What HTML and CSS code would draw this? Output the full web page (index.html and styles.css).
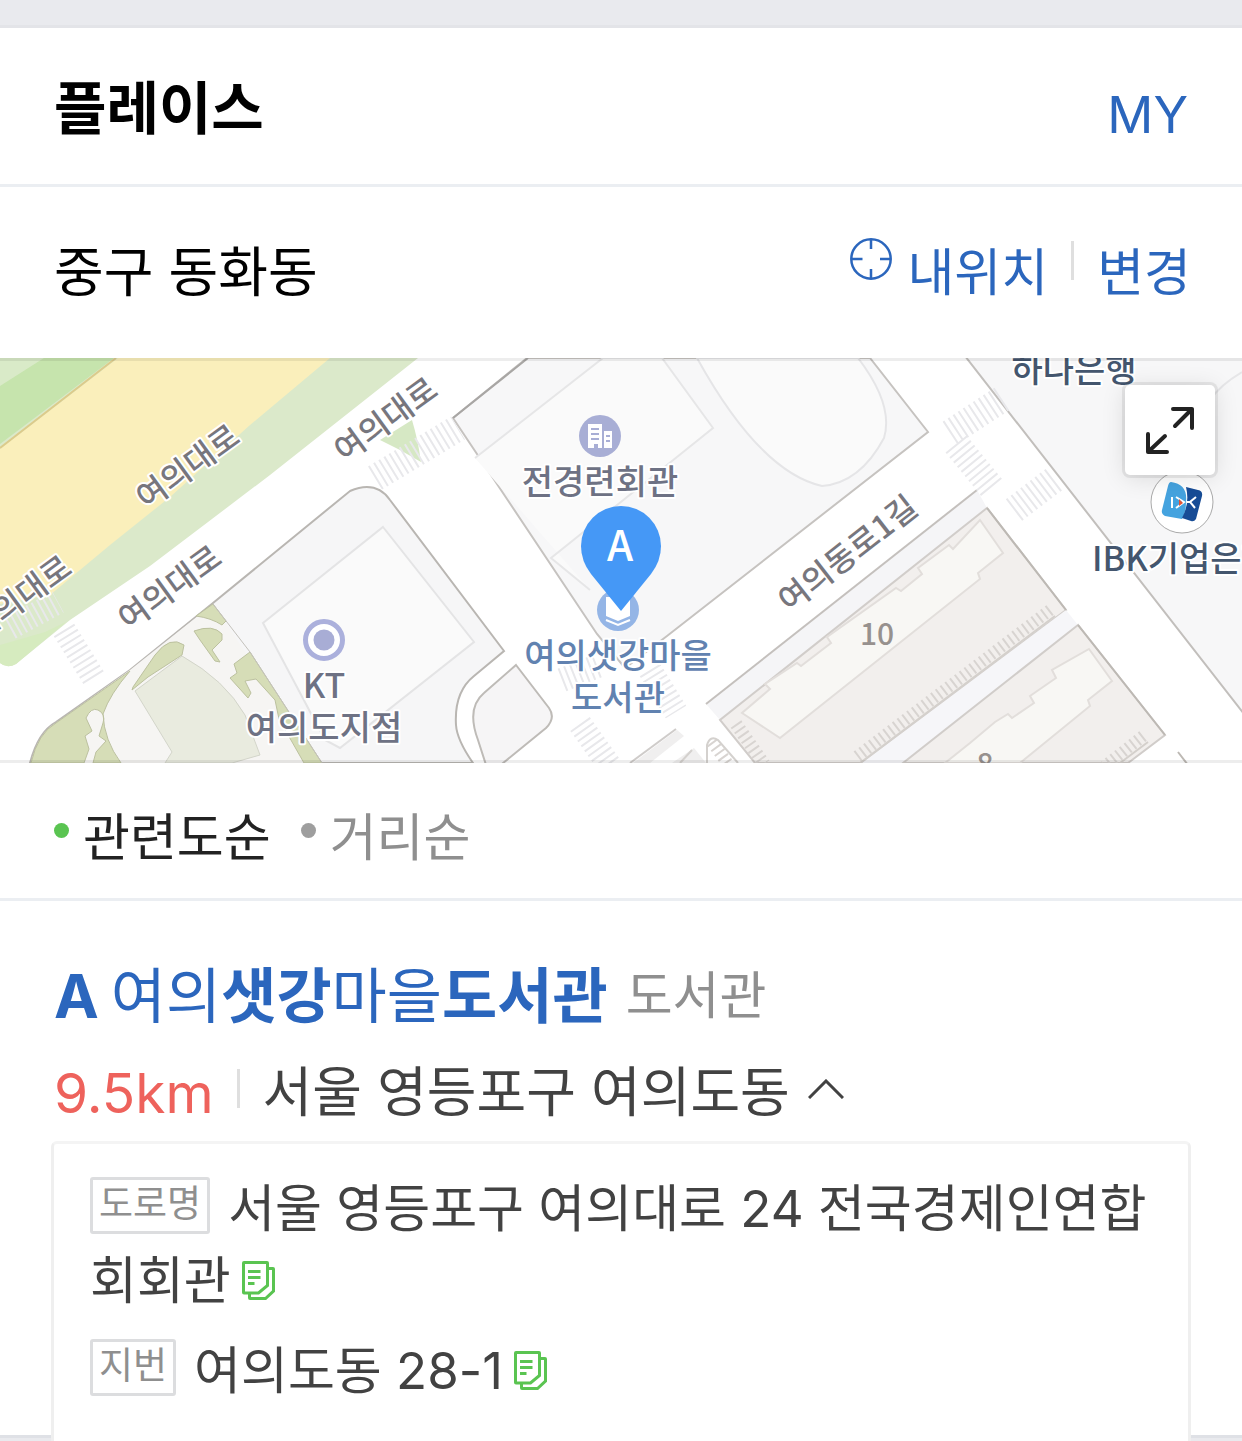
FILE: index.html
```html
<!DOCTYPE html>
<html lang="ko">
<head>
<meta charset="utf-8">
<meta name="viewport" content="width=device-width, initial-scale=1">
<title>플레이스</title>
<link rel="stylesheet" href="styles.css">
</head>
<body>
<svg width="0" height="0" class="symbols" aria-hidden="true">
  <symbol id="copy" viewBox="0 0 33 39">
    <path d="M3 1.5h22q.5 0 .5.5v22.500l-9 7.500H2q-.5 0-.5-.5V2q0-.5.5-.5z"/>
    <path d="M26 7.500h5q.5 0 .5.5v22l-8 7.500H8q-.5 0-.5-.5v-5"/>
    <path d="M6 10.500h12.500M6 16.500h12.500M6 22.500h6.500"/>
  </symbol>
</svg>
<div class="page">
  <div class="band"></div>
  <header class="header">
    <h1 class="title">플레이스</h1>
    <a class="my" href="#">MY</a>
  </header>

  <section class="location">
    <p class="area">중구 동화동</p>
    <div class="location-links">
      <a class="link locate" href="#">
        <svg class="target" viewBox="0 0 42 42" stroke-width="2.5" aria-hidden="true"><circle cx="21" cy="21" r="19.700"/><path d="M21 2v9M21 40v-9M2 21h10.500M40 21H30"/></svg>
        <span>내위치</span>
      </a>
      <span class="divider"></span>
      <a class="link" href="#">변경</a>
    </div>
  </section>

  <section class="map" aria-label="지도">
    <svg class="map-canvas" viewBox="0 358 1242 405" preserveAspectRatio="xMidYMid slice">
      <rect y="358" width="1242" height="405" fill="#fff"/>
      <!-- park strip along the avenue -->
      <path d="M0 358H418L270 475 150 566 70 620 16 664Q7 669 0 663z" fill="#dbe9ca"/>
      <path d="M0 645L45 632 66 622 16 664Q7 669 0 663z" fill="#d6ebbf"/>
      <path d="M118 358H330L250 425 170 497 110 545 50 595 0 604V449z" fill="#faefbb"/>
      <path d="M0 358H114L0 444z" fill="#c6e4ad"/>
      <path d="M0 358H44L0 386z" fill="#d9eac8"/>
      <path d="M116 358L0 448" stroke="#dccb8b" stroke-width="2"/>
      <path d="M380 440L412 420Q418 440 421 462L400 450z" fill="#d6e8c4"/>

      <!-- KT block and garden -->
      <path d="M30 763Q38 732 56 722L130 670 213 603 350 491Q376 480 390 500L504 651 474 676Q454 692 456 725 457 740 473 763z" fill="#f6f6f7" stroke="#b9b6b2" stroke-width="2"/>
      <path d="M213 604L130 670 56 723Q38 733 31 763H320z" fill="#f6f5f3"/>
      <path d="M383 527L474 642 340 748 325 740 263 623z" fill="#fafafa" stroke="#e4e4e5" stroke-width="2"/>
      <g fill="#d6ddb7" stroke="#bcc19f">
        <path d="M130 671L56 723Q38 733 31 763H84L89 749 85 736 92 731 86 718Q91 707 98 710 106 714 103 723L99 736 106 741 96 752 93 763H121Q104 740 103 714 110 694 130 671z"/>
        <path d="M133 687L155 655Q170 635 184 645L182 655 148 677 132 690z"/>
        <path d="M213 604L226 621 222 625Q211 618 196 616z"/>
        <path d="M194 631Q213 624 222 634L222 640 212 650 220 662 215 661 200 640z"/>
        <path d="M250 652L234 664 237 673 230 678 248 698 251 693 245 681 256 679 275 700 279 719 304 763H322z"/>
      </g>
      <path d="M182 656L135 691 172 752 165 763H232L260 755 245 715Q225 680 182 656z" fill="#e9ebdf" stroke="#d3d5ca"/>
      <path d="M213 604L250 652 322 763" fill="none" stroke="#c4c2bc"/>
      <path d="M516 665L549 708Q556 718 546 728L497 768H487L478 740Q466 708 484 693z" fill="#f6f5f6" stroke="#bebbb7" stroke-width="2"/>

      <!-- library block -->
      <path d="M527 358L453 418 597 634 625 668 667 636 928 432 870 358z" fill="#f7f7f8" stroke="#c6c3c0" stroke-width="2"/>
      <path d="M475 458L603 358H662L713 428 672 461 551 558 590 590" fill="#fafafa" stroke="#e6e6e7" stroke-width="2"/>
      <path d="M697 358Q760 472 822 486 860 483 884 438 894 405 858 358z" fill="#fafafa" stroke="#e5e5e7" stroke-width="2"/>
      <path d="M528 358L453 418" stroke="#a8a6a4" stroke-width="2"/>

      <!-- bank block -->
      <path d="M965 356L1244 714V356z" fill="#f7f7f8" stroke="#c2bfbc" stroke-width="2"/>
      <path d="M1242 372Q1220 385 1210 400" fill="none" stroke="#e6e6e8" stroke-width="2"/>

      <!-- apartment blocks -->
      <path d="M977 490L706 704 720 720 987 508z" fill="#f5f5f7"/>
      <path d="M977 490L706 704" stroke="#c4c0bd" stroke-width="2"/>
      <path d="M987 508L720 720 755 763H862L1066 610z" fill="#f2efed" stroke="#d1cdca" stroke-width="2"/>
      <path d="M980 520L1003 553 978 573 980 579 780 738 742 713 770 689 765 684 797 663 801 666 831 643 827 637 896 588 901 591 922 574 918 568 949 545 953 549z" fill="#f8f7f4" stroke="#e2dedb" stroke-width="2"/>
      <path d="M1066 610L862 763H905L1078 625z" fill="#f6f6f9"/>
      <path d="M1078 625L903 763H1128L1165 735z" fill="#f2efed" stroke="#d1cdca" stroke-width="2"/>
      <path d="M1089 649L1112 681 1088 700 1090 706 1020 763H945L970 743 995 722 1008 714 1012 718 1034 703 1030 696 1056 678 1052 670z" fill="#f8f7f4" stroke="#e2dedb" stroke-width="2"/>
      <path d="M987 508L1066 610M1078 625L1165 735M1178 752L1188 765" stroke="#bdb9b4" stroke-width="2"/>
      <path d="M633 763L677 730 684 736 650 763zM672 763L694 748 706 763z" fill="#f0efef"/>
      <path d="M630 763L676 729" fill="none" stroke="#cfccca" stroke-width="2"/>
      <g fill="none" stroke="#d8d4d1">
        <path d="M1050 610L855 758" stroke-width="12" stroke-dasharray="2 4"/>
        <path d="M1143 736L1105 766" stroke-width="12" stroke-dasharray="2 4"/>
        <path d="M736 724L764 764" stroke-width="13" stroke-dasharray="2 4"/>
        <path d="M712 742L728 764" stroke-width="12" stroke-dasharray="2 4"/>
      </g>
      <path d="M1055 616L860 763M1148 742L1120 763" stroke="#d4d0cc" stroke-width="2"/>
      <path d="M707 763V745Q710 735 718 740L738 763M680 763L692 750" fill="none" stroke="#d4d1ce" stroke-width="2"/>
      <!-- crosswalks -->
      <g fill="none" stroke="#e8e8eb">
        <path d="M950 433L1002 399M956 444L992 488M1014 510L1056 478M375 478L458 428" stroke-width="27" stroke-dasharray="2 4"/>
        <path d="M64 630L95 680M10 628L58 602M580 724L610 766M562 680L600 665M650 670L676 712" stroke-width="24" stroke-dasharray="2 4"/>
      </g>

      <g class="road">
        <text transform="translate(188 467) rotate(-36)" y="11">여의대로</text>
        <text transform="translate(170 588) rotate(-36)" y="11">여의대로</text>
        <text transform="translate(386 420) rotate(-36)" y="11">여의대로</text>
        <text transform="translate(20 598) rotate(-36)" y="11">여의대로</text>
        <text transform="translate(848 554) rotate(-38)" y="11">여의동로1길</text>
      </g>
      <g class="block-number"><text x="877" y="645">10</text><text x="985" y="775">8</text></g>

      <circle cx="600" cy="436" r="21" fill="#a8aed5"/>
      <path d="M588 424H602V448H598V444H594V448H588zM604 431H612V448H604z" fill="#fff"/>
      <path d="M591 429h8M591 434h8M591 439h8M606 436h4M606 441h4" stroke="#a8aed5" stroke-width="2"/>
      <circle cx="324" cy="640" r="18.500" fill="#fff" stroke="#abb0dc" stroke-width="5"/>
      <circle cx="324" cy="640" r="10.500" fill="#a8add5"/>
      <circle cx="618" cy="610" r="21" fill="#94b5e6"/>
      <path d="M606 597H630V616L618 621 606 616z" fill="#fff"/>
      <path d="M606 620L618 625 630 620" fill="none" stroke="#fff" stroke-width="2"/>
      <circle cx="1182" cy="502" r="31" fill="#fff" stroke="#aaa"/>
      <path d="M1171 482Q1188 484 1186 502 1186 513 1182 519L1165 516Q1161 514 1162 510L1168 486Q1169 482 1171 482z" fill="#45a3df"/>
      <path d="M1186 487L1198 490Q1203 491 1202 496L1196 519Q1194 522 1191 521L1182 518Q1190 503 1186 487z" fill="#174c96"/>
      <path d="M1172 497v11M1176 497l8 5-8 6M1187 502h3M1196 497l-6 5 5 6" fill="none" stroke="#fff" stroke-width="2"/>
      <path d="M1179 499l4 4-4 3z" fill="#e35435"/>

      <g class="place"><text x="600" y="494">전경련회관</text><text x="324" y="698">KT</text><text x="324" y="740">여의도지점</text></g>
      <g class="place library"><text x="618" y="668">여의샛강마을</text><text x="618" y="710">도서관</text></g>
      <g class="place bank"><text x="1074" y="382">하나은행</text><text class="from-start" x="1092" y="571">IBK기업은행</text></g>

      <path d="M621 611L591 574Q581 561 581 546A40 40 0 0 1 661 546Q661 561 651 574z" fill="#4598f6"/>
      <text class="pin-letter" x="620" y="561">A</text>
    </svg>
    <button class="expand" type="button" aria-label="지도 확대">
      <svg viewBox="0 0 48 48" aria-hidden="true"><path d="M27 3H46V22M46 3L29 20M2 28V46H21M2 46L19 30"/></svg>
    </button>
  </section>

  <nav class="sort" aria-label="정렬">
    <a class="sort-item is-active" href="#">관련도순</a>
    <a class="sort-item" href="#">거리순</a>
  </nav>

  <main class="result">
    <div class="heading">
      <h2 class="name"><a href="#"><b class="rank">A</b>여의<b>샛강</b>마을<b>도서관</b></a></h2>
      <span class="category">도서관</span>
    </div>
    <div class="summary">
      <span class="distance">9.5km</span>
      <span class="divider"></span>
      <button class="address-toggle" type="button" aria-expanded="true">
        <span>서울 영등포구 여의도동</span>
        <svg class="chevron" viewBox="0 0 36 20" aria-hidden="true"><path d="M1 19L18 2 35 19"/></svg>
      </button>
    </div>
    <div class="panel-anchor">
      <div class="panel">
        <p class="address"><span class="badge">도로명</span>서울 영등포구 여의대로 24 전국경제인연합회회관<button class="copy" type="button" aria-label="도로명 주소 복사"><svg aria-hidden="true"><use href="#copy"/></svg></button></p>
        <p class="address"><span class="badge">지번</span>여의도동 28-1<button class="copy" type="button" aria-label="지번 주소 복사"><svg aria-hidden="true"><use href="#copy"/></svg></button></p>
      </div>
    </div>
  </main>
  <div class="band band-bottom"></div>
</div>
</body>
</html>
```
FILE: styles.css
```css
* {
  box-sizing: border-box;
}

body,
h1,
h2,
p {
  margin: 0;
}

body {
  background: #fff;
  color: #424242;
  font-family: Inter, "Noto Sans CJK KR", sans-serif;
  font-size: 51px;
  line-height: 72px;
}

a {
  color: inherit;
  text-decoration: none;
}

button {
  padding: 0;
  border: 0;
  background: none;
  color: inherit;
  font: inherit;
  cursor: pointer;
}

.symbols {
  position: absolute;
}

.page {
  display: flex;
  flex-direction: column;
  min-height: 100vh;
  overflow: hidden;
}

.band {
  height: 28px;
  background: #e9eaee;
  border-bottom: 3px solid #e3e4e8;
}

.band-bottom {
  height: 6px;
  border-top: 3px solid #dfe1e6;
  border-bottom: 0;
}

.header {
  display: flex;
  justify-content: space-between;
  align-items: flex-start;
  padding: 45px 54px 33px;
  border-bottom: 3px solid #ebeef2;
}

.title {
  color: #000;
  font-size: 57px;
  font-weight: 700;
}

.my {
  margin-top: 6px;
  color: #2b66bd;
}

.location {
  display: flex;
  justify-content: space-between;
  padding: 50px 51px 49px 54px;
}

.area {
  color: #000;
  font-size: 54px;
}

.location-links,
.locate,
.summary,
.heading,
.address-toggle {
  display: flex;
  align-items: flex-start;
}

.link {
  color: #2b66bd;
}

.locate {
  gap: 15px;
}

.target {
  width: 42px;
  height: 42px;
  margin-top: 1px;
  fill: none;
  stroke: #2b66bd;
}

.divider {
  width: 3px;
  height: 39px;
  margin: 4px 23px 0;
  background: #dfdfdf;
}

.map {
  position: relative;
  height: 405px;
  overflow: hidden;
}

.map::after {
  content: "";
  position: absolute;
  inset: 0;
  border: solid rgba(0, 0, 0, 0.07);
  border-width: 3px 0;
  pointer-events: none;
}

.map-canvas {
  display: block;
  width: 100%;
  height: 100%;
}

.map-canvas text {
  font-family: "Noto Sans CJK KR", sans-serif;
  font-size: 34px;
  font-weight: 500;
  text-anchor: middle;
  stroke: #fff;
  stroke-width: 4px;
  stroke-linejoin: round;
  paint-order: stroke;
}

.map-canvas .road text {
  fill: #77767d;
  font-size: 32px;
}

.map-canvas .block-number text {
  fill: #97918e;
  font-size: 30px;
  stroke: none;
}

.map-canvas .place text {
  fill: #6e7284;
}

.map-canvas .library text {
  fill: #6182b0;
}

.map-canvas .bank text {
  fill: #44566e;
}

.map-canvas .bank .from-start {
  text-anchor: start;
}

.map-canvas .pin-letter {
  fill: #fff;
  stroke: none;
  font-size: 42px;
}

.expand {
  position: absolute;
  top: 27px;
  right: 27px;
  display: grid;
  place-items: center;
  width: 90px;
  height: 90px;
  border-radius: 5px;
  background: #fff;
  box-shadow: 0 0 0 3px rgba(0, 0, 0, 0.07), 0 3px 24px rgba(0, 0, 0, 0.12);
}

.expand svg {
  width: 48px;
  height: 48px;
  fill: none;
  stroke: #222;
  stroke-width: 4;
  stroke-linecap: round;
  stroke-linejoin: round;
  overflow: visible;
}

.sort {
  display: flex;
  gap: 30px;
  padding: 39px 54px 24px;
  border-bottom: 3px solid #ebeef2;
}

.sort-item {
  display: flex;
  gap: 14px;
  color: #8f8f8f;
}

.sort-item::before {
  content: "";
  width: 15px;
  height: 15px;
  margin-top: 21px;
  border-radius: 50%;
  background: #9e9e9e;
}

.sort-item.is-active {
  color: #222;
}

.sort-item.is-active::before {
  background: #5ac451;
}

.result {
  flex: 1;
  padding: 53px 51px 0;
}

.heading {
  gap: 18px;
  align-items: center;
  padding-left: 3px;
}

.name {
  color: #2b66bd;
  font-size: 60px;
  font-weight: 400;
  line-height: 84px;
}

.rank {
  margin-right: 12px;
}

.category {
  color: #8f8f8f;
}

.summary {
  margin-top: 19px;
  padding-left: 3px;
  font-size: 54px;
}

.summary .divider {
  margin-top: 12px;
}

.distance {
  color: #ee625c;
  font-size: 55px;
}

.address-toggle {
  gap: 18px;
}

.chevron {
  width: 36px;
  height: 20px;
  margin-top: 22px;
  fill: none;
  stroke: #424242;
  stroke-width: 3;
}

.panel-anchor {
  position: relative;
  margin-top: 12px;
}

.panel {
  position: absolute;
  inset: 0 0 auto;
  padding: 29px 36px 60px;
  border: 3px solid #efefef;
  border-top-color: #f4f4f4;
  border-radius: 6px;
  background: #fff;
}

.address {
  word-break: break-all;
}

.address + .address {
  margin-top: 18px;
}

.badge {
  display: inline-block;
  height: 57px;
  margin: 4px 18px 0 0;
  padding: 0 6px;
  border: 3px solid #dcdddf;
  border-radius: 3px;
  color: #8f8f8f;
  font-size: 37px;
  line-height: 48px;
  vertical-align: top;
}

.copy {
  display: inline-block;
  width: 33px;
  height: 39px;
  margin: 16px 0 0 11px;
  vertical-align: top;
}

.copy svg {
  display: block;
  width: 33px;
  height: 39px;
  fill: none;
  stroke: #5ac451;
  stroke-width: 3;
}
```
